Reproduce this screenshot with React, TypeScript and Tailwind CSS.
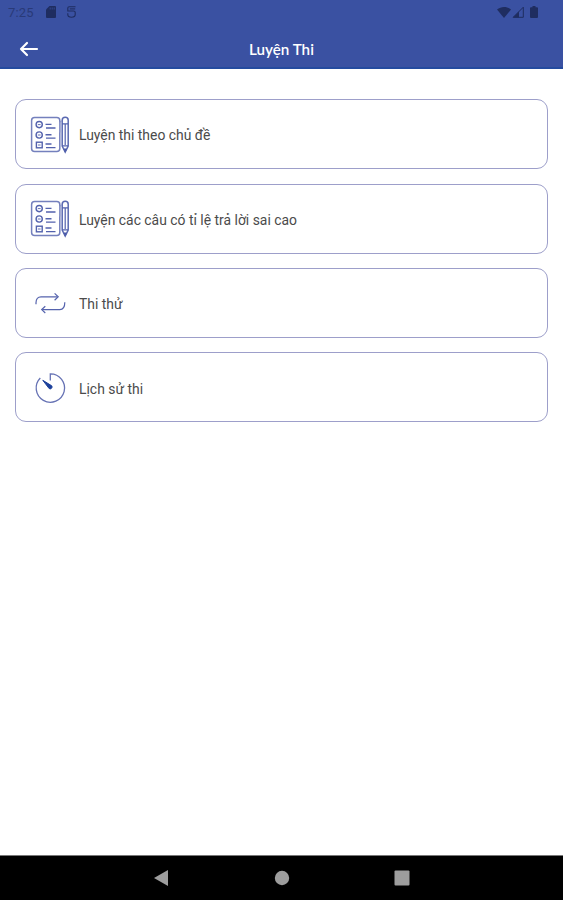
import type { ReactNode } from "react";

type MenuItem = {
  title: string;
  icon: ReactNode;
};

function ChecklistIcon() {
  return (
    <svg width="40" height="40" viewBox="0 0 40 40" fill="none" stroke="#5362ad">
      <rect x="1.6" y="2.6" width="28.2" height="33.8" rx="3" stroke="#7480bd" strokeWidth="1.5" />
      <circle cx="9.2" cy="9.6" r="3.1" strokeWidth="1.4" />
      <path d="M7.8 9.6h2.8" strokeWidth="0.9" />
      <circle cx="9.2" cy="20" r="3.1" strokeWidth="1.4" />
      <path d="M7.8 20h2.8" strokeWidth="0.9" />
      <rect x="6.4" y="27.2" width="5.8" height="5.6" strokeWidth="1.4" />
      <path d="M8 30h2.6" strokeWidth="0.9" />
      <path d="M15.5 9.4h6M15.500 19.700h6M15.500 29h6" strokeWidth="1.4" />
      <path d="M16 13h9.500M16 23.200h9.500M16 32.600h9.500" strokeWidth="1.300" />
      <path d="M32.200 31V5.200a3 3 0 0 1 6 0V31l-3 6z" stroke="#5a69b1" strokeWidth="1.500" />
      <path d="M32 8.800h6M35.200 9v21M32 30.800h6" strokeWidth="1.200" />
      <path d="M32 6c-1.800 0-2.200.8-2.200 2.500v9" stroke="#8f99cc" strokeWidth="1.100" />
      <path d="M33.800 34h2.800l-1.400 3z" fill="#3f51a5" />
    </svg>
  );
}

function RepeatIcon() {
  return (
    <svg width="40" height="40" viewBox="0 0 40 40" fill="none" stroke="#5563ad" strokeWidth="1.2">
      <path d="M6 20.200v-1.400c0-3.500 2-6 5-6h16.300" />
      <path d="M24.600 9.400l3.600 3.400-3.600 3.400" />
      <path d="M34.800 18.300c0 4.500-2 7.300-5 7.300H12.300" />
      <path d="M15.300 22.200l-3.600 3.400 3.600 3.400" />
    </svg>
  );
}

function TimerIcon() {
  return (
    <svg width="40" height="40" viewBox="0 0 40 40" fill="none" stroke="#6672b4" strokeWidth="1.3">
      <path d="M20.300 12.500V5.800A14.200 14.200 0 1 1 10.300 10" />
      <path d="M12.800 12.300l8.900 5.500a1.900 1.900 0 0 1-2.600 2.700z" fill="#1c409b" stroke="#1c409b" strokeWidth="1" strokeLinejoin="round" />
    </svg>
  );
}

const items: MenuItem[] = [
  { title: "Luyện thi theo chủ đề", icon: <ChecklistIcon /> },
  { title: "Luyện các câu có tỉ lệ trả lời sai cao", icon: <ChecklistIcon /> },
  { title: "Thi thử", icon: <RepeatIcon /> },
  { title: "Lịch sử thi", icon: <TimerIcon /> },
];

function StatusBar() {
  return (
    <div className="flex h-6 items-center justify-between pl-2 pr-[25px] text-[#1f2d60]">
      <div className="flex items-center">
        <span className="w-[38px] font-[Roboto] text-[13px] leading-none tracking-[0.2px] text-[#293a78]">
          7:25
        </span>
        <svg width="10" height="12" viewBox="0 0 10 12" fill="currentColor">
          <path d="M3.500 0H9a1 1 0 0 1 1 1v10a1 1 0 0 1-1 1H1a1 1 0 0 1-1-1V3.500z" />
          <path d="M4.200 1.500v2M6.200 1.500v2M8.200 1.500v2" stroke="#3a51a2" strokeWidth="0.700" />
        </svg>
        <svg className="ml-[11px]" width="9" height="12" viewBox="0 0 9 12" fill="none" stroke="currentColor" strokeWidth="1.100">
          <path d="M8.500.8H2.200C1.200.8.8 1.200.8 2v3h5.800c1.100 0 1.600.5 1.600 1.500v2c0 1.800-1.300 2.700-3.700 2.700S.8 10.300.8 8.500V7.200" />
          <path d="M2.800 2.900h5.400" />
        </svg>
      </div>
      <div className="flex items-center">
        <svg width="14" height="11" viewBox="0 0 14 11" fill="currentColor">
          <path d="M7 11L0 2.600C4-.8 10-.8 14 2.600z" />
        </svg>
        <svg className="ml-[1px]" width="12" height="12" viewBox="0 0 12 12" fill="none" stroke="currentColor">
          <path d="M1.200 11.300L11.300 1.200v10.100z" />
          <path d="M1 11.500l6-6v6z" fill="currentColor" stroke="none" />
        </svg>
        <svg className="ml-[6px]" width="8" height="12" viewBox="0 0 8 12" fill="currentColor">
          <path d="M2.500 0h3v1.200H7a1 1 0 0 1 1 1V11a1 1 0 0 1-1 1H1a1 1 0 0 1-1-1V2.200a1 1 0 0 1 1-1h1.500z" />
        </svg>
      </div>
    </div>
  );
}

function Header() {
  return (
    <header className="h-[69px] border-b-2 border-[#244b9f] bg-[#3a51a2]">
      <StatusBar />
      <div className="grid h-[43px] grid-cols-[1fr_auto_1fr] items-center pt-[7px]">
        <button className="ml-[19px] w-5" aria-label="Back">
          <svg width="20" height="16" viewBox="0 0 20 16" fill="none" stroke="white" strokeWidth="2.200" strokeLinecap="round" strokeLinejoin="round">
            <path d="M18 8H2M8 2L2 8l6 6" />
          </svg>
        </button>
        <h1 className="font-[Lato] text-[15.2px] font-semibold leading-5 text-white">Luyện Thi</h1>
      </div>
    </header>
  );
}

function MenuCard({ title, icon }: MenuItem) {
  return (
    <button className="flex h-[70px] w-full items-center gap-[9px] rounded-[11px] border border-[#9d9fca] pl-3.5 pt-px text-left">
      {icon}
      <span className="pt-0.5 font-[Roboto] text-[13.9px] text-[#4b4b4b]">{title}</span>
    </button>
  );
}

function NavigationBar() {
  return (
    <nav className="h-[45px] border-t border-[#777777] bg-black">
      <svg className="mx-auto block" width="260" height="44" viewBox="0 0 260 44" fill="#9d9d9d">
        <path d="M2 22l14-8v16z" />
        <circle cx="130" cy="22" r="7.200" />
        <rect x="242.500" y="14.500" width="15" height="15" rx="1" />
      </svg>
    </nav>
  );
}

export default function App() {
  return (
    <div className="flex h-screen flex-col bg-white">
      <Header />
      <main className="flex flex-1 flex-col gap-[14.4px] px-[15px] pt-[30.3px]">
        {items.map((item) => (
          <MenuCard key={item.title} title={item.title} icon={item.icon} />
        ))}
      </main>
      <NavigationBar />
    </div>
  );
}
